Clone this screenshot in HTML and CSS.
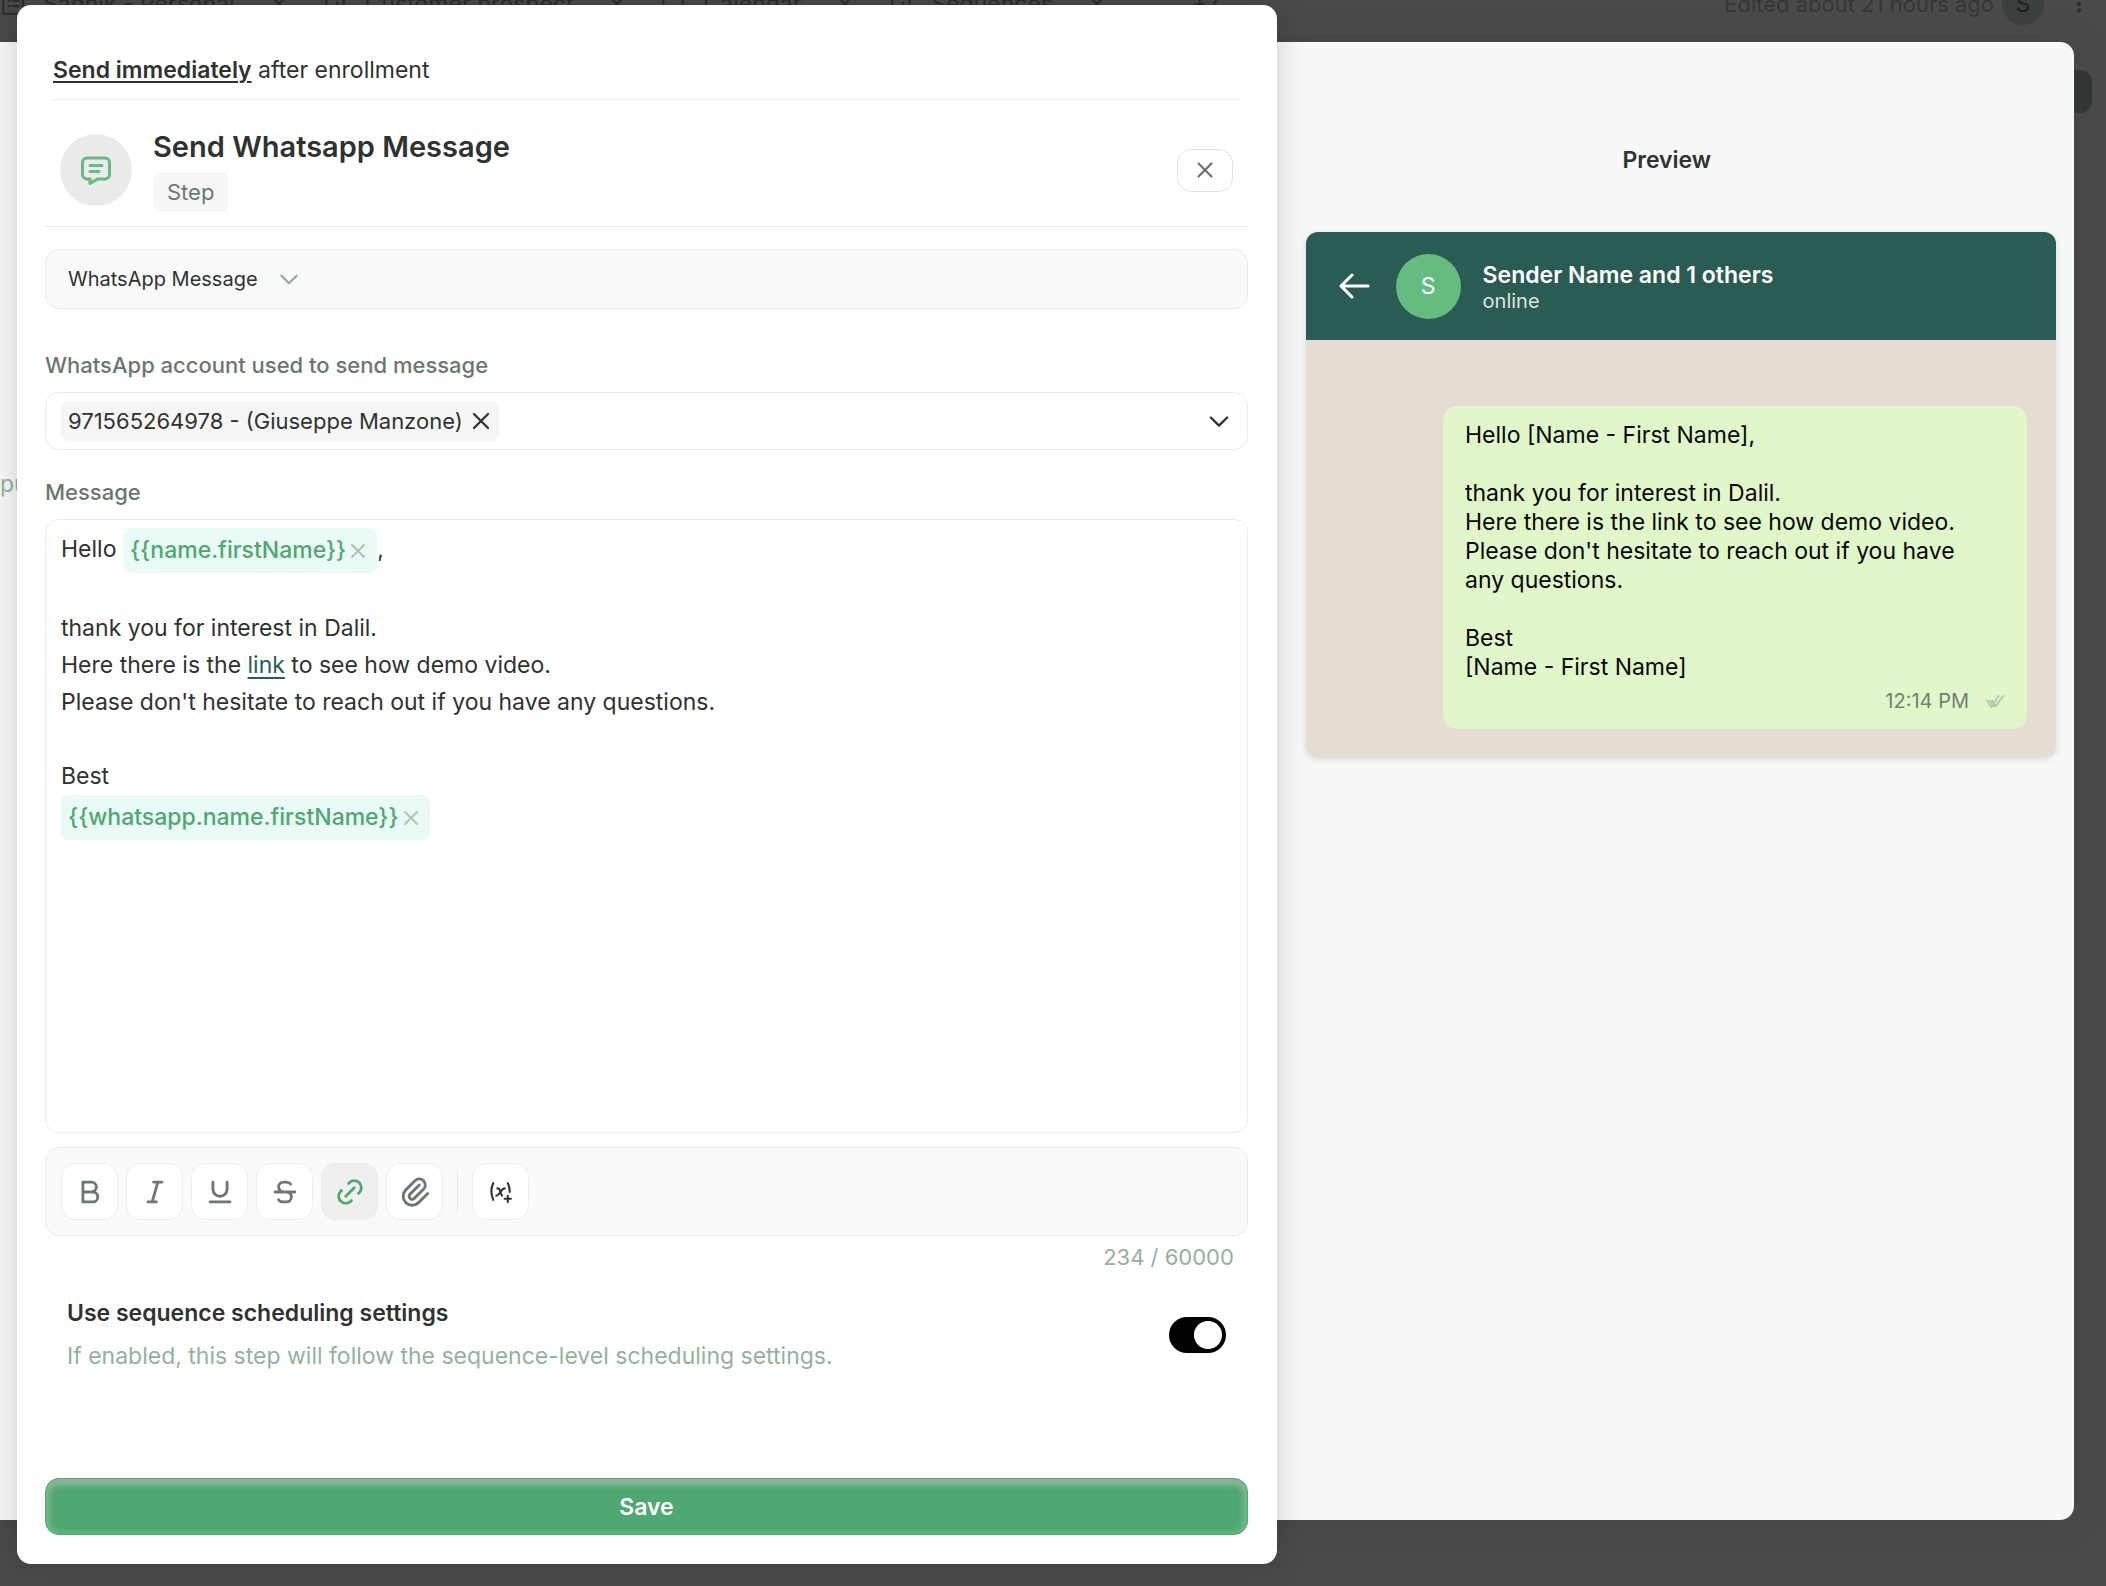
FILE: index.html
```html
<!DOCTYPE html>
<html lang="en">
<head>
<meta charset="UTF-8">
<meta name="viewport" content="width=device-width, initial-scale=1.0">
<title>Send Whatsapp Message</title>
<link rel="stylesheet" href="styles.css">
</head>
<body>

<div class="stage">

  <header class="topbar">
    <nav class="tabs">
      <span class="tab"><svg class="icon" viewBox="0 0 24 24"><rect x="3" y="3" width="18" height="18" rx="2"/><path d="M8 9h1M12 9h5M8 14h1M12 14h5"/></svg>Sadnik - Personal <svg class="icon tab-x" viewBox="0 0 24 24"><path d="M6 6l12 12M18 6L6 18"/></svg></span>
      <span class="tab"><svg class="icon" viewBox="0 0 24 24"><path d="M4 4v16M9 14v6M14 11v9M20 4v16"/></svg>Customer prospect <svg class="icon tab-x" viewBox="0 0 24 24"><path d="M6 6l12 12M18 6L6 18"/></svg></span>
      <span class="tab"><svg class="icon" viewBox="0 0 24 24"><rect x="3" y="4" width="18" height="14" rx="2"/></svg>Calendar <svg class="icon tab-x" viewBox="0 0 24 24"><path d="M6 6l12 12M18 6L6 18"/></svg></span>
      <span class="tab"><svg class="icon" viewBox="0 0 24 24"><path d="M4 4v16M9 14v6M14 11v9M20 4v16"/></svg>Sequences <svg class="icon tab-x" viewBox="0 0 24 24"><path d="M6 6l12 12M18 6L6 18"/></svg></span>
      <span class="tab more">+7</span>
    </nav>
    <span class="edited">Edited about 21 hours ago</span>
    <span class="user">S</span>
    <svg class="icon" viewBox="0 0 24 24"><path d="M12 6v.1M12 12v.1M12 18v.1" stroke-width="4"/></svg>
  </header>

  <div class="side-handle"></div>

  <main class="sheet">
    <div class="sheet-left">
      <span class="hidden-label">pu</span>
    </div>
    <section class="preview">
      <h2 class="preview-title">Preview</h2>
      <div class="phone">
        <div class="phone-head">
          <svg class="icon back" viewBox="0 0 36 36"><path d="M32 18H5M16 7L5 18l11 11"/></svg>
          <span class="avatar">S</span>
          <div class="sender">
            <strong>Sender Name and 1 others</strong>
            <span>online</span>
          </div>
        </div>
        <div class="phone-body">
          <div class="bubble">
            <p>Hello [Name - First Name],<br><br>thank you for interest in Dalil.<br>Here there is the link to see how demo video.<br>Please don't hesitate to reach out if you have any questions.<br><br>Best<br>[Name - First Name]</p>
            <div class="bubble-meta">
              <time>12:14 PM</time>
              <svg class="icon ticks" viewBox="0 0 22 18"><path d="M2 8l5 7L15 3M8 8l4 6L20 3M5 8l5 6"/></svg>
            </div>
          </div>
        </div>
      </div>
    </section>
  </main>

  <form class="modal">
    <p class="timing"><b>Send immediately</b> after enrollment</p>

    <div class="step-head">
      <span class="step-icon">
        <svg class="icon" viewBox="0 0 24 24"><path d="M8 9h8M8 13h6M18 4a3 3 0 0 1 3 3v8a3 3 0 0 1-3 3h-5l-5 3v-3H6a3 3 0 0 1-3-3V7a3 3 0 0 1 3-3z"/></svg>
      </span>
      <div class="step-text">
        <h1>Send Whatsapp Message</h1>
        <span class="badge">Step</span>
      </div>
      <button type="button" class="close" aria-label="Close">
        <svg class="icon" viewBox="0 0 24 24"><path d="M18 6L6 18M6 6l12 12"/></svg>
      </button>
    </div>

    <div class="type-box">
      <select class="type-select" aria-label="Message type">
        <option>WhatsApp Message</option>
      </select>
      <svg class="icon" viewBox="0 0 24 24"><path d="M5 9l7 7 7-7"/></svg>
    </div>

    <label class="field-label" for="account">WhatsApp account used to send message</label>
    <div class="account">
      <span class="account-chip">971565264978 - (Giuseppe Manzone)
        <button type="button" class="plain" aria-label="Remove account"><svg class="icon" viewBox="0 0 24 24"><path d="M18 6L6 18M6 6l12 12"/></svg></button>
      </span>
      <button type="button" class="plain" id="account" aria-haspopup="listbox"><svg class="icon chevron" viewBox="0 0 24 24"><path d="M5 9l7 7 7-7"/></svg></button>
    </div>

    <span class="field-label" id="message-label">Message</span>
    <div class="editor" contenteditable="true" spellcheck="false" role="textbox" aria-multiline="true" aria-labelledby="message-label">
      <p>Hello <span class="variable">{{name.firstName}}<svg class="icon" viewBox="0 0 24 24"><path d="M18 6L6 18M6 6l12 12"/></svg></span>,</p>
      <p><br></p>
      <p>thank you for interest in Dalil.</p>
      <p>Here there is the <a href="#">link</a> to see how demo video.</p>
      <p>Please don't hesitate to reach out if you have any questions.</p>
      <p><br></p>
      <p>Best</p>
      <p><span class="variable">{{whatsapp.name.firstName}}<svg class="icon" viewBox="0 0 24 24"><path d="M18 6L6 18M6 6l12 12"/></svg></span></p>
    </div>

    <div class="toolbar">
      <button type="button" class="tool" aria-label="Bold"><svg class="icon" viewBox="0 0 24 24"><path d="M7 5h6a3.5 3.5 0 0 1 0 7H7zM13 12h1a3.5 3.5 0 0 1 0 7H7v-7"/></svg></button>
      <button type="button" class="tool" aria-label="Italic"><svg class="icon" viewBox="0 0 24 24"><path d="M11 5h6M7 19h6M14 5l-4 14"/></svg></button>
      <button type="button" class="tool" aria-label="Underline"><svg class="icon" viewBox="0 0 24 24"><path d="M7 5v5a5 5 0 0 0 10 0V5M5 19h14"/></svg></button>
      <button type="button" class="tool" aria-label="Strikethrough"><svg class="icon" viewBox="0 0 24 24"><path d="M5 12h14M16 6.5A4 2 0 0 0 12 5h-1a3.5 3.5 0 0 0 0 7h2a3.5 3.5 0 0 1 0 7h-1.5a4 2 0 0 1-4-1.5"/></svg></button>
      <button type="button" class="tool active" aria-label="Link"><svg class="icon" viewBox="0 0 24 24"><path d="M9 15l6-6M11 6l.463-.536a5 5 0 0 1 7.071 7.072L18 13M13 18l-.397.534a5.068 5.068 0 0 1-7.127 0 4.972 4.972 0 0 1 0-7.071L6 11"/></svg></button>
      <button type="button" class="tool" aria-label="Attach file"><svg class="icon" viewBox="0 0 24 24"><path d="M15 7l-6.500 6.500a1.500 1.500 0 0 0 3 3L18 10a3 3 0 0 0-6-6l-6.500 6.500a4.500 4.500 0 0 0 9 9L21 13"/></svg></button>
      <span class="divider"></span>
      <button type="button" class="tool insert" aria-label="Insert variable"><svg class="icon" viewBox="0 0 24 24"><path d="M5 4c-2.500 5-2.500 10 0 16M19 4c1.380 2.760 2 5.520 1.855 8.448M9 9h1c1 0 1 1 2.016 3.527.782 1.966.943 3 1.478 3.343M8 16c1.500 0 3-2 4-3.500S14.500 9 16 9M16 19h6M19 16v6"/></svg></button>
    </div>
    <div class="counter">234 / 60000</div>

    <div class="schedule">
      <label for="schedule">
        <strong>Use sequence scheduling settings</strong>
        <span>If enabled, this step will follow the sequence-level scheduling settings.</span>
      </label>
      <input type="checkbox" id="schedule" class="toggle" checked>
    </div>

    <button type="button" class="save">Save</button>
  </form>

</div>

</body>
</html>
```
FILE: styles.css
```css
* {
  box-sizing: border-box;
}
body {
  margin: 0;
  font-family: Inter, "Liberation Sans", sans-serif;
  font-size: 23px;
  color: #2e3330;
  background-color: #4a4a4a;
}
h1, h2, p {
  margin: 0;
}
button, select {
  font: inherit;
  color: inherit;
}
.icon {
  width: 28px;
  height: 28px;
  flex: none;
  fill: none;
  stroke: currentColor;
  stroke-width: 2;
  stroke-linecap: round;
  stroke-linejoin: round;
}

/* the modal and the sheet share the same grid and overlap */
.stage {
  display: grid;
  grid-template-columns: minmax(0, 77fr) minmax(0, 50fr);
  grid-template-rows: 42px 1fr 66px;
  min-height: 100vh;
}

/* dimmed app behind */
.topbar {
  grid-area: 1 / 1 / 2 / 3;
  display: flex;
  align-items: center;
  gap: 8px;
  height: 42px;
  margin-top: -17px;
  padding-right: 14px;
  overflow: hidden;
  color: #2b2d2b;
}
.topbar .icon {
  width: 26px;
  height: 26px;
}
.tabs {
  display: flex;
  flex: 1;
  gap: 30px;
}
.tab {
  display: flex;
  align-items: center;
  gap: 17px;
  white-space: nowrap;
}
.more {
  padding-left: 52px;
}
.edited {
  font-size: 22px;
  color: #333633;
}
.user {
  width: 42px;
  height: 42px;
  line-height: 42px;
  border-radius: 50%;
  background-color: #3a403c;
  color: #1c1f1d;
  text-align: center;
}
.topbar .icon:last-child {
  margin-left: 14px;
}
.side-handle {
  grid-area: 2 / 2 / 3 / 3;
  justify-self: end;
  width: 40px;
  height: 43px;
  margin: 28px 14px 0 0;
  border-radius: 12px;
  background-color: #323532;
}

.sheet {
  grid-area: 2 / 1 / 3 / 3;
  display: grid;
  grid-template-columns: minmax(0, 77fr) minmax(0, 48fr);
  margin-right: 32px;
  border-radius: 0 14px 14px 0;
  background-color: #f7f8f8;
  box-shadow: 0 0 24px rgba(60, 70, 64, 0.5);
}
.sheet-left {
  padding-top: 428px;
  color: #93b29b;
}
.preview {
  padding: 103px 18px 0 0;
}
.preview-title {
  font-size: 23px;
  line-height: 30px;
  font-weight: 600;
  text-align: center;
}
.phone {
  margin: 57px 0 0 28px;
  border-radius: 12px;
  background-color: #e5ddd4;
  box-shadow: 0 2px 6px rgba(0, 0, 0, 0.14);
  overflow: hidden;
}
.phone-head {
  display: flex;
  align-items: center;
  height: 108px;
  padding: 0 30px;
  background-color: #2a5c54;
  color: #fff;
}
.back {
  width: 36px;
  height: 36px;
  stroke-width: 3;
}
.avatar {
  flex: none;
  width: 65px;
  height: 65px;
  margin: 0 22px 0 24px;
  line-height: 65px;
  border-radius: 50%;
  background-color: #66bb80;
  text-align: center;
}
.sender {
  padding-top: 4px;
}
.sender strong,
.sender span {
  display: block;
  line-height: 26px;
  font-weight: 600;
}
.sender span {
  font-size: 20px;
  font-weight: 400;
  color: #dfe5dc;
}
.phone-body {
  display: flex;
  justify-content: flex-end;
  padding: 66px 29px 28px;
}
.bubble {
  width: 584px;
  padding: 15px 22px 13px;
  border-radius: 14px;
  background-color: #e1f7ca;
  color: #050805;
  line-height: 29px;
}
.bubble p {
  padding-right: 22px;
}
.bubble-meta {
  display: flex;
  justify-content: flex-end;
  align-items: center;
  gap: 16px;
  margin-top: 5px;
  font-size: 20px;
  color: #6f8273;
}
.ticks {
  width: 20px;
  height: 17px;
  color: #b3c6ae;
}

.modal {
  grid-area: 1 / 1 / 4 / 2;
  z-index: 1;
  display: flex;
  flex-direction: column;
  margin: 5px 0 22px 17px;
  padding: 38px 29px 29px 28px;
  border-radius: 14px;
  background-color: #fff;
  box-shadow: 0 0 30px rgba(0, 0, 0, 0.18);
}
.timing {
  margin: 0 8px;
  padding: 12px 0 14px;
  line-height: 30px;
  border-bottom: 1px solid #e9ebea;
}
.timing b {
  font-weight: 600;
  text-decoration: underline;
  text-decoration-thickness: 2px;
  text-underline-offset: 3px;
}
.step-head {
  display: flex;
  align-items: center;
  gap: 21px;
  height: 127px;
  padding: 14px 15px 0 15px;
  border-bottom: 1px solid #e9ebea;
}
.step-icon {
  display: flex;
  align-items: center;
  justify-content: center;
  width: 72px;
  height: 72px;
  border-radius: 50%;
  background-color: #ebebeb;
  color: #66bb80;
}
.step-icon .icon {
  width: 36px;
  height: 36px;
}
.step-text {
  flex: 1;
}
.step-text h1 {
  font-size: 29px;
  line-height: 36px;
  font-weight: 600;
}
.badge {
  display: inline-block;
  margin-top: 7px;
  padding: 0 14px;
  line-height: 40px;
  border-radius: 8px;
  background-color: #f6f7f7;
  font-size: 22px;
  color: #697a6d;
}
.close {
  display: flex;
  align-items: center;
  justify-content: center;
  width: 56px;
  height: 43px;
  padding: 0;
  border: 1px solid #e8e1d9;
  border-radius: 14px;
  background-color: #fff;
  color: #6b736a;
}
.close .icon,
.type-box .icon {
  width: 26px;
  height: 26px;
}
.type-box {
  display: flex;
  align-items: center;
  gap: 18px;
  height: 60px;
  margin-top: 22px;
  padding: 0 22px;
  border: 1px solid #e9ebea;
  border-radius: 14px;
  background-color: #f9fafa;
}
.type-select {
  appearance: none;
  padding: 0;
  border: none;
  background: none;
  font-size: 20px;
}
.type-box .icon {
  color: #8fa896;
}
.field-label {
  margin: 42px 0 13px;
  font-size: 22px;
  line-height: 28px;
  font-weight: 500;
  color: #69786d;
}
.account {
  display: flex;
  align-items: center;
  justify-content: space-between;
  height: 58px;
  padding: 0 14px 0 15px;
  border: 1px solid #e9ebea;
  border-radius: 14px;
}
.account-chip {
  display: flex;
  align-items: center;
  gap: 4px;
  height: 40px;
  padding: 0 4px 0 7px;
  border-radius: 8px;
  background-color: #f6f6f6;
  font-size: 22px;
}
.plain {
  display: flex;
  padding: 0;
  border: none;
  background: none;
}
.account + .field-label {
  margin-top: 28px;
}
.editor {
  flex: 1;
  min-height: 400px;
  padding: 8px 15px;
  border: 1px solid #e9ebea;
  border-radius: 14px;
  line-height: 37px;
}
.editor a {
  color: #2a5c54;
  text-decoration-thickness: 2px;
  text-underline-offset: 4px;
}
.variable {
  display: inline-flex;
  align-items: center;
  height: 45px;
  padding: 0 7px;
  vertical-align: middle;
  border-radius: 8px;
  background-color: #eafaf5;
  font-weight: 500;
  color: #4fa771;
}
.variable .icon {
  width: 24px;
  height: 24px;
  color: #b5bfb2;
}
.toolbar {
  display: flex;
  align-items: center;
  gap: 8px;
  height: 89px;
  margin-top: 14px;
  padding: 0 15px;
  border: 1px solid #e9ebea;
  border-radius: 14px;
  background-color: #f9fafa;
}
.tool {
  display: flex;
  align-items: center;
  justify-content: center;
  width: 57px;
  height: 57px;
  padding: 0;
  border: 1px solid #eceeed;
  border-radius: 14px;
  background-color: #fff;
  color: #6f786f;
}
.tool .icon {
  width: 34px;
  height: 34px;
}
.tool.active {
  background-color: #efefef;
  color: #4fa771;
}
.tool.insert {
  color: #2e3330;
}
.tool.insert .icon {
  width: 25px;
  height: 25px;
}
.divider {
  width: 1px;
  height: 43px;
  margin: 0 6px;
  background-color: #e6e8e7;
}
.counter {
  margin: 7px 14px 0;
  font-size: 22px;
  line-height: 28px;
  text-align: right;
  color: #93b29b;
}
.schedule {
  display: flex;
  align-items: center;
  justify-content: space-between;
  margin: 24px 22px 0;
}
.schedule strong,
.schedule span {
  display: block;
  line-height: 36px;
  font-weight: 600;
}
.schedule span {
  margin-top: 7px;
  font-weight: 400;
  color: #93b29b;
}
.toggle {
  appearance: none;
  width: 57px;
  height: 36px;
  margin: 0;
  padding: 4px;
  border-radius: 18px;
  background-color: #000;
}
.toggle::before {
  content: "";
  display: block;
  width: 28px;
  height: 28px;
  border-radius: 50%;
  background-color: #fff;
}
.toggle:checked::before {
  margin-left: auto;
}
.save {
  height: 57px;
  margin-top: 104px;
  border: 1px solid #4fa771;
  border-radius: 14px;
  background-color: #4fa771;
  box-shadow: inset 0 5px 6px #93b29b, inset 0 2px 6px 4px #66bb80;
  font-weight: 600;
  color: #fff;
}
```
